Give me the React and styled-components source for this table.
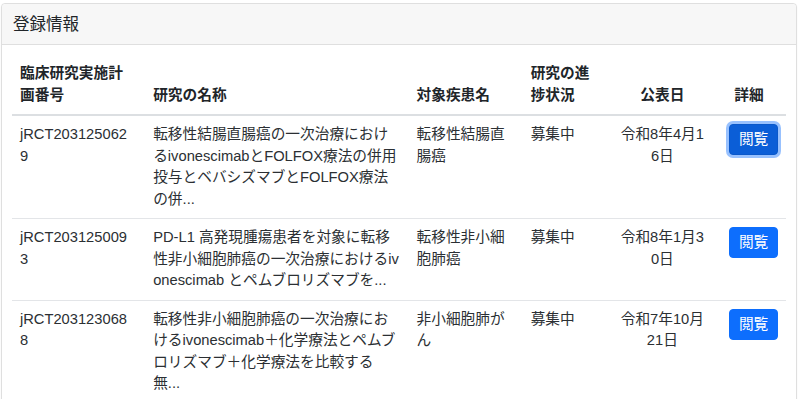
import React from 'react';
import styled, { createGlobalStyle } from 'styled-components';

const rows = [
	{
		id: 'jRCT2031250629',
		title: '転移性結腸直腸癌の一次治療におけるivonescimabとFOLFOX療法の併用投与とベバシズマブとFOLFOX療法の併...',
		disease: '転移性結腸直腸癌',
		status: '募集中',
		date: '令和8年4月16日',
		focused: true,
	},
	{
		id: 'jRCT2031250093',
		title: 'PD-L1 高発現腫瘍患者を対象に転移性非小細胞肺癌の一次治療におけるivonescimab とペムブロリズマブを...',
		disease: '転移性非小細胞肺癌',
		status: '募集中',
		date: '令和8年1月30日',
	},
	{
		id: 'jRCT2031230688',
		title: '転移性非小細胞肺癌の一次治療におけるivonescimab＋化学療法とペムブロリズマブ＋化学療法を比較する無...',
		disease: '非小細胞肺がん',
		status: '募集中',
		date: '令和7年10月21日',
	},
];

export default function App() {
	return (
		<>
			<GlobalStyle />
			<Page>
				<Card>
					<CardHeader>登録情報</CardHeader>
					<CardBody>
						<Table>
							<colgroup>
								<col style={{ width: 133 }} />
								<col style={{ width: 263 }} />
								<col style={{ width: 114 }} />
								<col style={{ width: 88 }} />
								<col style={{ width: 110 }} />
								<col style={{ width: 65 }} />
							</colgroup>
							<thead>
								<tr>
									<Th $kind="id">臨床研究実施計画番号</Th>
									<Th $kind="title">研究の名称</Th>
									<Th>対象疾患名</Th>
									<Th>研究の進捗状況</Th>
									<Th $kind="date">公表日</Th>
									<Th $kind="action">詳細</Th>
								</tr>
							</thead>
							<tbody>
								{rows.map((row) => (
									<tr key={row.id}>
										<Td $kind="id">{row.id}</Td>
										<Td $kind="title">{row.title}</Td>
										<Td>{row.disease}</Td>
										<Td>{row.status}</Td>
										<Td $kind="date">{row.date}</Td>
										<Td>
											<ViewButton $focused={row.focused}>閲覧</ViewButton>
										</Td>
									</tr>
								))}
							</tbody>
						</Table>
					</CardBody>
				</Card>
			</Page>
		</>
	);
}

const cellPadding = {
	id: '8px 11px 8px 8px',
	title: '8px 8.8px 8px 8px',
	date: '8px 15px 8px 8px',
	action: '8px 17px 8px 8px',
};

const GlobalStyle = createGlobalStyle`
	body {
		margin: 0;
		background: #fff;
		color: #212529;
		font-family: "Liberation Sans", "Noto Sans CJK JP", sans-serif;
	}
`;

const Page = styled.div`
	padding: 3px 3px 0 1px;
`;

const Card = styled.div`
	border: 1px solid #dfdfdf;
	border-radius: 4px;
	background: #fff;
	box-shadow: 0 1px 2px rgba(0, 0, 0, 0.05);
`;

const CardHeader = styled.div`
	background: #f7f7f7;
	border-bottom: 1px solid #dfdfdf;
	border-radius: 4px 4px 0 0;
	padding: 8px 11px;
	font-size: 16.5px;
	line-height: 24px;
	color: #212529;
`;

const CardBody = styled.div`
	padding: 10px 10px 10px;
`;

const Table = styled.table`
	width: 100%;
	table-layout: fixed;
	border-collapse: collapse;
	font-size: 14.7px;
	line-height: 21.5px;
	word-break: break-all;
	color: #2b2f33;
`;

const Th = styled.th`
	font-weight: 700;
	vertical-align: bottom;
	color: #212529;
	text-align: ${(p) => (p.$kind === 'date' || p.$kind === 'action' ? 'center' : 'left')};
	padding: ${(p) => cellPadding[p.$kind] || '8px'};
	border-bottom: 2px solid #dcdfe2;
`;

const Td = styled.td`
	vertical-align: top;
	text-align: ${(p) => (p.$kind === 'date' ? 'center' : 'left')};
	padding: ${(p) => cellPadding[p.$kind] || '8px'};
	border-bottom: 1px solid #e3e5e8;
`;

const ViewButton = styled.button`
	display: inline-block;
	font-family: inherit;
	font-size: 14.7px;
	line-height: 21px;
	padding: 4px 9px;
	border-radius: 4px;
	color: #fff;
	border: 1px solid ${(p) => (p.$focused ? '#0a58ca' : '#0d6efd')};
	background: ${(p) => (p.$focused ? '#0b5ed7' : '#0d6efd')};
	box-shadow: ${(p) => (p.$focused ? '0 0 0 3px rgba(49, 132, 253, 0.5)' : 'none')};
	cursor: pointer;
	white-space: nowrap;
`;
